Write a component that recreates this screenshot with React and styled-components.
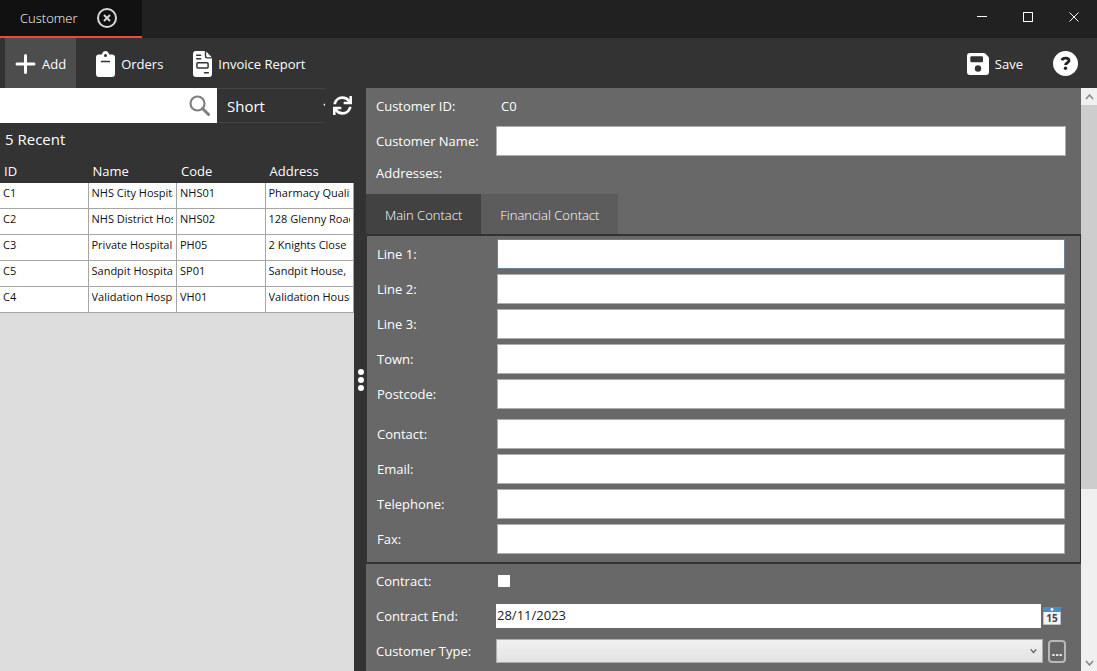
import React, { useState } from 'react';
import styled, { createGlobalStyle } from 'styled-components';
import { FaSync } from 'react-icons/fa';

const GlobalStyle = createGlobalStyle`
  * {
    box-sizing: border-box;
  }

  body {
    margin: 0;
    background: #333333;
    color: #ffffff;
    font-family: 'Open Sans', 'Noto Sans', sans-serif;
    font-size: 13px;
    line-height: 18px;
  }

  button,
  input,
  select {
    margin: 0;
    font: inherit;
    color: inherit;
    border-radius: 0;
  }
`;

const Window = styled.div`
  display: flex;
  flex-direction: column;
  height: 100vh;
  overflow: hidden;
`;

const TitleBar = styled.header`
  display: flex;
  flex: none;
  justify-content: space-between;
  height: 38px;
  background: #212121;
`;

const DocumentTab = styled.div`
  display: flex;
  align-items: center;
  gap: 20px;
  width: 142px;
  padding-left: 20px;
  background: #111111;
  border-bottom: 2px solid #e84c3d;
  font-weight: 300;
`;

const IconButton = styled.button`
  display: flex;
  align-items: center;
  justify-content: center;
  padding: 0;
  background: none;
  border: none;
  cursor: pointer;
`;

const WindowControls = styled.div`
  display: flex;
  height: 34px;
`;

const WindowButton = styled(IconButton)`
  width: 46px;
`;

const Toolbar = styled.nav`
  display: flex;
  flex: none;
  gap: 10px;
  height: 50px;
  padding: 0 9px 0 5px;
  background: #333333;
`;

const ToolButton = styled.button`
  display: flex;
  align-items: center;
  gap: 6px;
  padding: 1px 10px 0;
  border: none;
  background: ${props => (props.$active ? '#4d4d4d' : 'transparent')};
  cursor: pointer;
`;

const Spacer = styled.div`
  flex: 1;
`;

const Body = styled.main`
  display: flex;
  flex: 1;
  min-height: 0;
`;

const Sidebar = styled.aside`
  display: flex;
  flex-direction: column;
  flex: 0 0 354px;
  background: #dddddd;
`;

const SidebarHead = styled.div`
  background: #333333;
`;

const SearchRow = styled.div`
  display: flex;
  height: 35px;
`;

const SearchBox = styled.div`
  display: flex;
  flex: 1;
  min-width: 0;
  padding-right: 7px;
  background: #ffffff;
`;

const SearchInput = styled.input`
  flex: 1;
  min-width: 0;
  padding: 0 5px;
  border: none;
  outline: none;
  background: none;
  color: #222222;
`;

const ModeBox = styled.div`
  display: flex;
  align-items: center;
  width: 108px;
  border: solid #444444;
  border-width: 1px 0;
  overflow: hidden;

  svg {
    flex: none;
    margin-right: -7px;
  }
`;

const ModeSelect = styled.select`
  flex: 1;
  padding: 0 0 0 10px;
  appearance: none;
  border: none;
  background: none;
  font-size: 15px;
`;

const RefreshButton = styled(IconButton)`
  width: 29px;
  padding-left: 6px;
`;

const RecentTitle = styled.h2`
  height: 37px;
  margin: 0;
  padding: 5px;
  font-size: 15px;
  font-weight: 400;
  line-height: 22px;
`;

const CustomerTable = styled.table`
  width: 100%;
  table-layout: fixed;
  border-spacing: 0;
`;

const HeadCell = styled.th`
  height: 23px;
  padding: 0 4px 1px;
  background: #333333;
  font-weight: 400;
  text-align: left;
`;

const Cell = styled.td`
  height: 26px;
  padding: 1px 3px 7px;
  background: #ffffff;
  border: solid #a6a6a6;
  border-width: 0 1px 1px 0;
  color: #111111;
  font-size: 11px;
  line-height: 17px;
`;

const CellText = styled.div`
  overflow: hidden;
  white-space: nowrap;
`;

const Splitter = styled.div`
  display: flex;
  flex: 0 0 12px;
  align-items: center;
  justify-content: center;
  padding-left: 2px;
  background: #333333;
`;

const Form = styled.form`
  flex: 1;
  min-width: 0;
  padding-top: 1px;
  overflow-y: auto;
  scrollbar-width: none;
  background: #686868;
`;

const Row = styled.div`
  display: grid;
  grid-template-columns: 120px minmax(0, 1fr);
  align-items: center;
  height: ${props => (props.$short ? '29px' : '35px')};
  padding: 2px 15px 3px 10px;
`;

const FieldValue = styled.output`
  padding-left: 5px;
`;

const TextInput = styled.input`
  width: 100%;
  height: 30px;
  padding: 0 4px;
  background: #ffffff;
  border: 1px solid ${props => (props.$hot ? '#6a8296' : '#abadb3')};
  color: #222222;

  &:focus {
    outline: none;
    border-color: #569de5;
  }
`;

const TabList = styled.div`
  display: flex;
  margin-top: 6px;
`;

const Tab = styled.button`
  height: 40px;
  padding: 2px 19px 0;
  border: none;
  background: ${props => (props.$active ? '#424242' : '#5c5c5c')};
  font-weight: 300;
  cursor: pointer;
`;

const TabPanel = styled.div`
  padding: 1px 0 5px;
  border: solid #333333;
  border-width: 2px 1px;
`;

const FieldGroup = styled.div`
  & + & {
    margin-top: 5px;
  }
`;

const Checkbox = styled.input`
  appearance: none;
  width: 12px;
  height: 12px;
  margin: 0 2px;
  background: #ffffff;

  &:checked {
    border: 3px solid #ffffff;
    background: #333333;
  }
`;

const FieldWithButton = styled.div`
  display: grid;
  grid-template-columns: minmax(0, 1fr) auto;
  align-items: center;
  gap: 5px;
`;

const DateInput = styled(TextInput)`
  height: 24px;
  padding: 0 1px 2px;
  border: none;
`;

const DateField = styled(FieldWithButton)`
  gap: 2px;
  padding-right: 5px;
`;

const TypeBox = styled.div`
  display: flex;
  align-items: center;
  height: 24px;
  padding-right: 5px;
  border: 1px solid #acacac;
  background: linear-gradient(#f0f0f0, #e3e3e3);
`;

const TypeSelect = styled.select`
  flex: 1;
  height: 22px;
  appearance: none;
  border: none;
  background: none;
  color: #222222;
`;

const MoreButton = styled.button`
  width: 18px;
  height: 23px;
  padding: 0;
  border: 2px solid #b8b8b8;
  border-radius: 4px;
  background: #666666;
  font-weight: 700;
  line-height: 18px;
`;

const ScrollBar = styled.div`
  display: flex;
  flex-direction: column;
  flex: 0 0 16px;
  background: #f0f0f0;
`;

const ScrollArrow = styled(IconButton)`
  height: 17px;
`;

const ScrollTrack = styled.div`
  flex: 1;
`;

const ScrollThumb = styled.div`
  height: 70%;
  background: #cdcdcd;
`;

const customers = [
  { id: 'C1', name: 'NHS City Hospital', code: 'NHS01', address: 'Pharmacy Quality' },
  { id: 'C2', name: 'NHS District Hospital', code: 'NHS02', address: '128 Glenny Road' },
  { id: 'C3', name: 'Private Hospital', code: 'PH05', address: '2 Knights Close' },
  { id: 'C5', name: 'Sandpit Hospital', code: 'SP01', address: 'Sandpit House,' },
  { id: 'C4', name: 'Validation Hospital', code: 'VH01', address: 'Validation House' },
];

const addressFields = ['Line 1', 'Line 2', 'Line 3', 'Town', 'Postcode'];
const contactFields = ['Contact', 'Email', 'Telephone', 'Fax'];

const CloseTabIcon = () => (
  <svg width="20" height="20" viewBox="0 0 20 20" fill="none" stroke="#d8d8d8" strokeWidth="2">
    <circle cx="10" cy="10" r="9" />
    <path d="M7 7l6 6M13 7l-6 6" />
  </svg>
);

const PlusIcon = () => (
  <svg width="21" height="20" viewBox="0 0 21 20" stroke="#fff" strokeWidth="3" strokeLinecap="round">
    <path d="M10.500 1.500v17M2 10h17" />
  </svg>
);

const ClipboardIcon = () => (
  <svg width="19" height="26" viewBox="0 0 19 26">
    <path
      fill="#fff"
      d="M3 3.500h2c.8 0 1-.4 1.400-1.200C7 .8 8 0 9.500 0s2.500.8 3.100 2.300c.4.800.6 1.200 1.400 1.200h2a3 3 0 0 1 3 3V23a3 3 0 0 1-3 3H3a3 3 0 0 1-3-3V6.500a3 3 0 0 1 3-3z"
    />
    <circle cx="9.500" cy="4.600" r="1.500" fill="#333" />
    <path d="M5.500 10.500h8" stroke="#333" strokeWidth="1.500" strokeLinecap="round" />
  </svg>
);

const InvoiceIcon = () => (
  <svg width="19" height="26" viewBox="0 0 19 26">
    <path fill="#fff" d="M3 0h8.800v5.200a2.300 2.300 0 0 0 2.300 2.300H19V23a3 3 0 0 1-3 3H3a3 3 0 0 1-3-3V3a3 3 0 0 1 3-3z" />
    <path fill="#fff" d="M13.200.4L18.700 6.200h-4.400a1.100 1.100 0 0 1-1.100-1.100z" />
    <path d="M3.700 4.300h4M3.700 7.800h4M11.500 21.800h3.800" stroke="#333" strokeWidth="1.500" strokeLinecap="round" />
    <rect x="3.900" y="11.700" width="11.200" height="5.200" rx="1" fill="none" stroke="#333" strokeWidth="1.500" />
  </svg>
);

const SaveIcon = () => (
  <svg width="22" height="22" viewBox="0 0 22 22">
    <path fill="#fff" d="M3 0h13.500c.8 0 1.500.3 2 .8l2.700 2.700c.5.500.8 1.200.8 2V19a3 3 0 0 1-3 3H3a3 3 0 0 1-3-3V3a3 3 0 0 1 3-3z" />
    <rect x="3.300" y="3.300" width="12.700" height="6" rx="1.200" fill="#333" />
    <circle cx="11" cy="15.500" r="3.200" fill="#333" />
  </svg>
);

const HelpIcon = () => (
  <svg width="25" height="25" viewBox="0 0 25 25">
    <circle cx="12.500" cy="12.500" r="12.500" fill="#fff" />
    <path
      d="M9 9.300c.4-1.500 1.800-2.100 3.500-2.100 2 0 3.500.8 3.500 2.400 0 2.300-3.500 2-3.500 4.500"
      fill="none"
      stroke="#222"
      strokeWidth="2.800"
    />
    <circle cx="12.500" cy="17.300" r="1.700" fill="#222" />
  </svg>
);

const SearchIcon = () => (
  <svg width="21" height="21" viewBox="0 0 21 21" fill="none" stroke="#808080">
    <circle cx="8.500" cy="8.500" r="7" strokeWidth="2.200" />
    <path d="M13.500 13.500l6 6" strokeWidth="3" strokeLinecap="round" />
  </svg>
);

const CalendarIcon = () => (
  <svg width="18" height="18" viewBox="0 0 18 18">
    <rect width="18" height="18" fill="#f4f4f4" stroke="#8a8f96" />
    <rect width="18" height="5" fill="#4a8cc7" />
    <circle cx="9" cy="2.500" r="1.400" fill="#fff" />
    <text x="9" y="15" fontSize="10" fontWeight="700" textAnchor="middle" fill="#444">15</text>
  </svg>
);

const Chevron = ({ up, color = '#888888', size = 9 }) => (
  <svg width={size} height="6" viewBox="0 0 9 6" fill="none" stroke={color} strokeWidth="1.600">
    <path d={up ? 'M1 5l3.500-4L8 5' : 'M1 1l3.500 4L8 1'} />
  </svg>
);

const Field = ({ label, hot }) => {
  const id = label.toLowerCase().replace(/ /g, '-');
  return (
    <Row>
      <label htmlFor={id}>{label}:</label>
      <TextInput id={id} type="text" $hot={hot} />
    </Row>
  );
};

const CustomerList = () => (
  <Sidebar>
    <SidebarHead>
      <SearchRow>
        <SearchBox>
          <SearchInput type="text" aria-label="Search customers" />
          <IconButton type="button" aria-label="Search"><SearchIcon /></IconButton>
        </SearchBox>
        <ModeBox>
          <ModeSelect aria-label="List mode">
            <option>Short</option>
          </ModeSelect>
          <Chevron color="#ffffff" />
        </ModeBox>
        <RefreshButton type="button" aria-label="Refresh"><FaSync size={19} /></RefreshButton>
      </SearchRow>
      <RecentTitle>5 Recent</RecentTitle>
    </SidebarHead>
    <CustomerTable>
      <thead>
        <tr>
          <HeadCell>ID</HeadCell>
          <HeadCell>Name</HeadCell>
          <HeadCell>Code</HeadCell>
          <HeadCell>Address</HeadCell>
        </tr>
      </thead>
      <tbody>
        {customers.map(customer => (
          <tr key={customer.id}>
            <Cell><CellText>{customer.id}</CellText></Cell>
            <Cell><CellText>{customer.name}</CellText></Cell>
            <Cell><CellText>{customer.code}</CellText></Cell>
            <Cell><CellText>{customer.address}</CellText></Cell>
          </tr>
        ))}
      </tbody>
    </CustomerTable>
  </Sidebar>
);

const CustomerForm = () => {
  const [tab, setTab] = useState('main');
  const [contractEnd, setContractEnd] = useState('28/11/2023');

  return (
    <Form>
      <Row>
        <label htmlFor="customer-id">Customer ID:</label>
        <FieldValue id="customer-id">C0</FieldValue>
      </Row>
      <Field label="Customer Name" />
      <Row $short>
        <span>Addresses:</span>
      </Row>

      <TabList role="tablist">
        <Tab type="button" role="tab" $active={tab === 'main'} onClick={() => setTab('main')}>
          Main Contact
        </Tab>
        <Tab type="button" role="tab" $active={tab === 'financial'} onClick={() => setTab('financial')}>
          Financial Contact
        </Tab>
      </TabList>
      <TabPanel key={tab} role="tabpanel">
        <FieldGroup>
          {addressFields.map((label, i) => <Field key={label} label={label} hot={i === 0} />)}
        </FieldGroup>
        <FieldGroup>
          {contactFields.map(label => <Field key={label} label={label} />)}
        </FieldGroup>
      </TabPanel>

      <Row>
        <label htmlFor="contract">Contract:</label>
        <Checkbox id="contract" type="checkbox" />
      </Row>
      <Row>
        <label htmlFor="contract-end">Contract End:</label>
        <DateField>
          <DateInput
            id="contract-end"
            type="text"
            value={contractEnd}
            onChange={(e) => setContractEnd(e.target.value)}
          />
          <IconButton type="button" aria-label="Pick a date"><CalendarIcon /></IconButton>
        </DateField>
      </Row>
      <Row>
        <label htmlFor="customer-type">Customer Type:</label>
        <FieldWithButton>
          <TypeBox>
            <TypeSelect id="customer-type" />
            <Chevron color="#555555" size={7} />
          </TypeBox>
          <MoreButton type="button">...</MoreButton>
        </FieldWithButton>
      </Row>
    </Form>
  );
};

const App = () => (
  <Window>
    <GlobalStyle />
    <TitleBar>
      <DocumentTab>
        Customer
        <IconButton type="button" aria-label="Close tab"><CloseTabIcon /></IconButton>
      </DocumentTab>
      <WindowControls>
        <WindowButton type="button" aria-label="Minimize">
          <svg width="10" height="10" stroke="#fff"><path d="M0 4.500h10" /></svg>
        </WindowButton>
        <WindowButton type="button" aria-label="Maximize">
          <svg width="10" height="10" stroke="#fff" fill="none"><rect x=".5" y=".5" width="9" height="9" /></svg>
        </WindowButton>
        <WindowButton type="button" aria-label="Close">
          <svg width="10" height="10" stroke="#fff"><path d="M.5 .5l9 9M9.500 .5l-9 9" /></svg>
        </WindowButton>
      </WindowControls>
    </TitleBar>

    <Toolbar>
      <ToolButton type="button" $active><PlusIcon />Add</ToolButton>
      <ToolButton type="button"><ClipboardIcon />Orders</ToolButton>
      <ToolButton type="button"><InvoiceIcon />Invoice Report</ToolButton>
      <Spacer />
      <ToolButton type="button"><SaveIcon />Save</ToolButton>
      <ToolButton type="button" aria-label="Help"><HelpIcon /></ToolButton>
    </Toolbar>

    <Body>
      <CustomerList />
      <Splitter>
        <svg width="8" height="24" fill="#fff">
          <circle cx="4" cy="4" r="3" />
          <circle cx="4" cy="12" r="3" />
          <circle cx="4" cy="20" r="3" />
        </svg>
      </Splitter>
      <CustomerForm />
      <ScrollBar>
        <ScrollArrow type="button" aria-label="Scroll up"><Chevron up /></ScrollArrow>
        <ScrollTrack><ScrollThumb /></ScrollTrack>
        <ScrollArrow type="button" aria-label="Scroll down"><Chevron /></ScrollArrow>
      </ScrollBar>
    </Body>
  </Window>
);

export default App;
